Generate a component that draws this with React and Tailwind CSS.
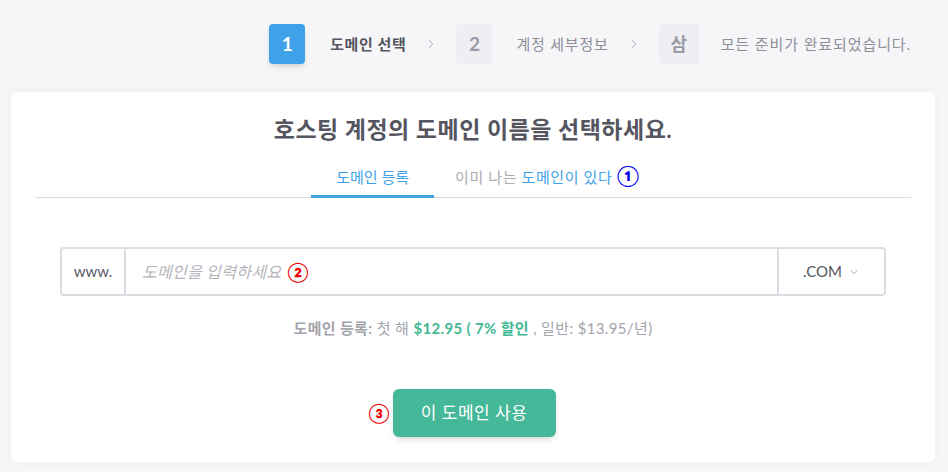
import { ChevronRight, ChevronDown } from "lucide-react";

const font = { fontFamily: '"Lato", "Noto Sans CJK KR", sans-serif' };

function Step({ num, label, active }) {
    return (
        <div className="flex items-center">
            <div
                className={
                    active
                        ? "flex h-10 w-9 items-center justify-center rounded bg-[#3fa2e8] text-[19px] font-bold text-white shadow-md"
                        : "flex h-10 w-9 items-center justify-center rounded bg-[#efeff3] text-[19px] font-bold text-[#9a9aa6]"
                }
            >
                {num}
            </div>
            <div
                className={
                    active
                        ? "ml-[25px] text-[15px] font-bold tracking-[0.6px] text-[#55555f]"
                        : "ml-[24px] text-[15px] tracking-[0.8px] text-[#8e8e98]"
                }
            >
                {label}
            </div>
        </div>
    );
}

function Sep() {
    return <ChevronRight className="mx-[18px] h-3.5 w-3.5 text-[#a0a0aa]" strokeWidth={1.5} />;
}

export default function App() {
    return (
        <div className="min-h-[472px] bg-[#f6f6f9] pb-[10px]" style={font}>
            {/* stepper */}
            <div className="flex items-center justify-end pr-[37px] pt-[24px]">
                <Step num="1" label="도메인 선택" active />
                <Sep />
                <Step num="2" label="계정 세부정보" />
                <Sep />
                <div className="flex items-center">
                    <div className="flex h-10 w-10 items-center justify-center rounded bg-[#efeff3] text-[18px] font-bold text-[#9a9aa6]">
                        삼
                    </div>
                    <div className="ml-[22px] text-[15px] tracking-[0.9px] text-[#8e8e98]">
                        모든 준비가 완료되었습니다.
                    </div>
                </div>
            </div>

            {/* card */}
            <div className="ml-[11px] mr-[13px] mt-[28px] rounded-md bg-white px-[24px] pb-[25px] pt-[20px] shadow-[0_0_12px_rgba(0,0,0,0.04)]">
                <h1 className="text-center text-[23px] font-bold tracking-[0.5px] text-[#55555f]">
                    호스팅 계정의 도메인 이름을 선택하세요.
                </h1>

                <div className="mt-[18px] flex justify-center border-b border-[#dcdcdf] pl-[26px]">
                    <div className="relative top-px border-b-[3px] border-[#3fa2e8] px-[25px] pb-[7px] text-[15px] text-[#3fa2e8]">
                        도메인 등록
                    </div>
                    <div className="px-[21px] pb-[7px] text-[15px] tracking-[0.6px] text-[#aaaab2]">
                        이미 나는 <span className="text-[#3fa2e8]">도메인이 있다</span>{" "}
                        <span className="text-[20px] font-bold leading-none text-[#0000ee]">①</span>
                    </div>
                </div>

                <div className="mx-[25px] mt-[49px] flex h-[49px] rounded border-2 border-[#dcdce2]">
                    <div className="flex w-[64px] items-center justify-center border-r-2 border-[#dcdce2] text-[15px] text-[#5b5b68]">
                        www.
                    </div>
                    <div className="flex flex-1 items-center pl-[16px] text-[16px] italic tracking-[0.3px] text-[#b4b4bc]">
                        도메인을 입력하세요
                        <span className="ml-[6px] text-[19px] font-bold not-italic leading-none text-[#ee0000]">②</span>
                    </div>
                    <div className="flex w-[107px] items-center justify-center gap-[6px] border-l-2 border-[#dcdce2] text-[15px] text-[#55555f]">
                        .COM
                        <ChevronDown className="h-3 w-3 text-[#8e8e98]" strokeWidth={1.5} />
                    </div>
                </div>

                <div className="mt-[21px] text-center text-[15px] tracking-[0.35px] text-[#a4a4ac]">
                    <span className="font-bold">도메인 등록:</span> 첫 해{" "}
                    <span className="font-bold text-[#43b893]">$12.95 ( 7% 할인</span> , 일반: $13.95/년)
                </div>

                <div className="mt-[49px] flex items-center justify-center pr-[22px]">
                    <span className="mr-[3px] text-[19px] font-bold leading-none text-[#ee0000]">③</span>
                    <button
                        type="button"
                        className="h-[48px] w-[163px] rounded-md bg-[#45b899] text-[17px] tracking-[0.5px] text-white shadow-md"
                    >
                        이 도메인 사용
                    </button>
                </div>
            </div>
        </div>
    );
}
